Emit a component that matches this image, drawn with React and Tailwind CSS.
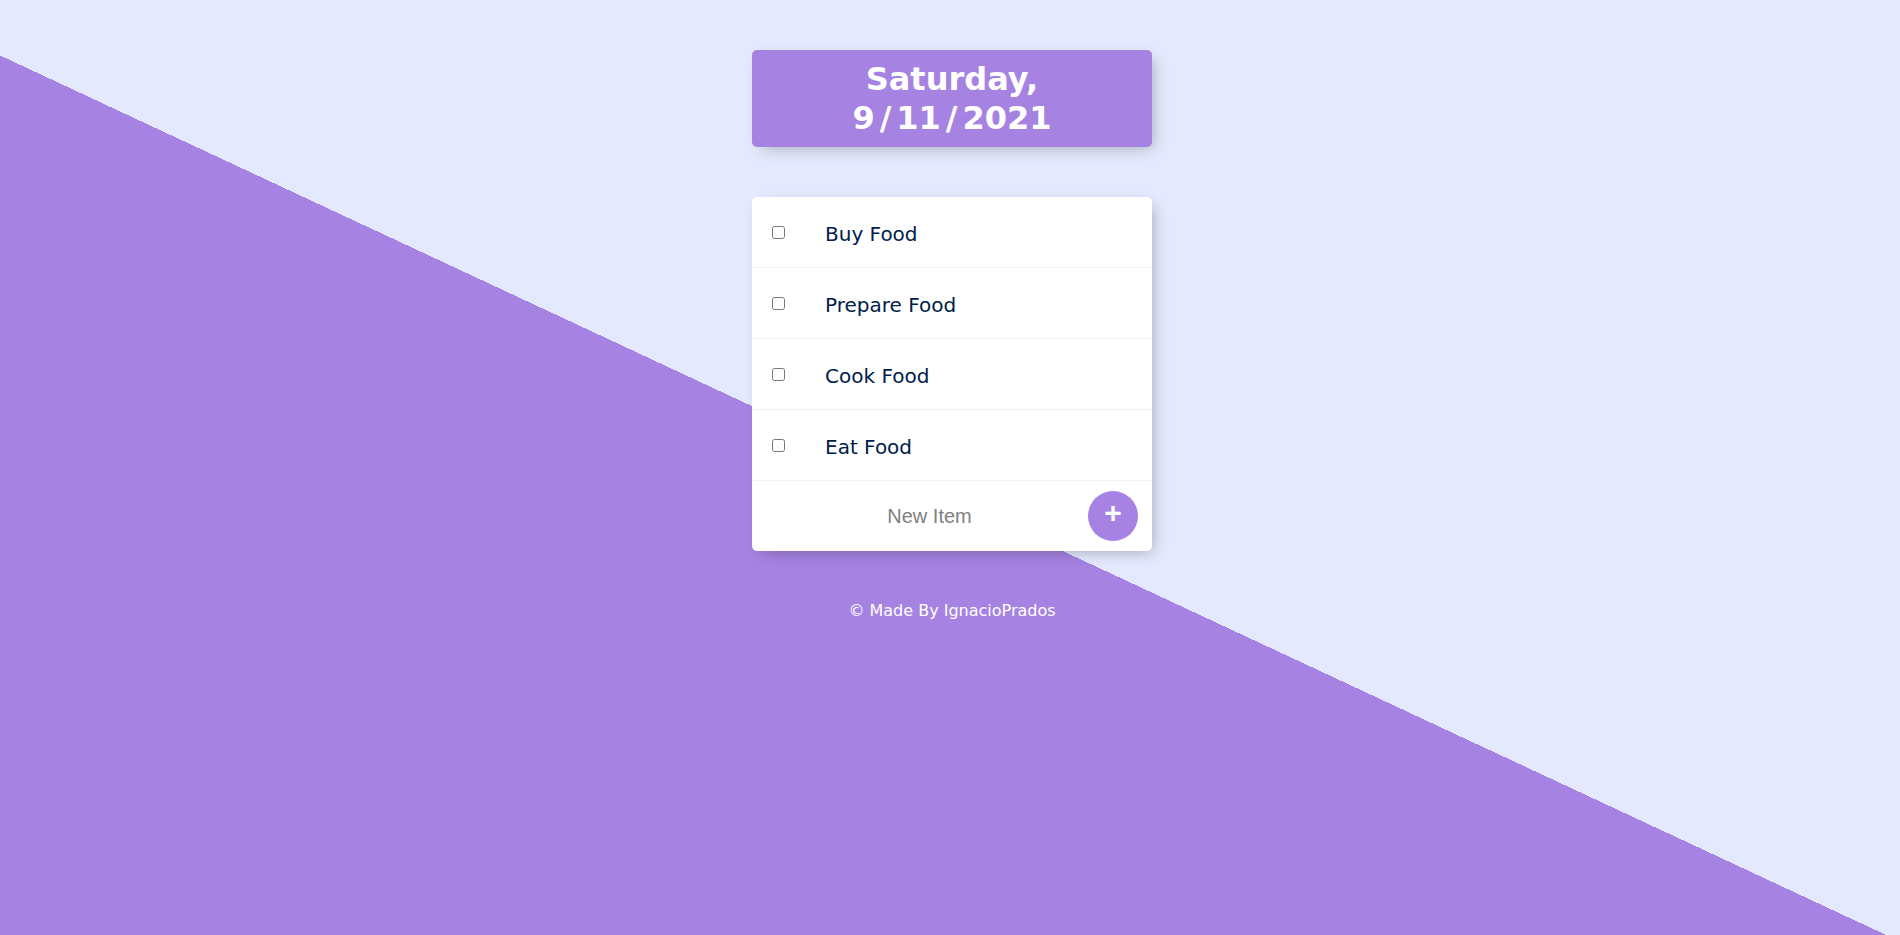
import { useState } from "react";

const initialItems = ["Buy Food", "Prepare Food", "Cook Food", "Eat Food"];

export default function App() {
  const [items, setItems] = useState(initialItems);
  const [done, setDone] = useState({});
  const [text, setText] = useState("");

  function addItem(e) {
    e.preventDefault();
    if (!text.trim()) return;
    setItems([...items, text.trim()]);
    setText("");
  }

  return (
    <div className="min-h-screen bg-[#E4E9FD] bg-[linear-gradient(25deg,#A683E3_48.3%,#E4E9FD_48.3%)] pl-1 pt-[50px] pb-px font-['DejaVu_Sans',Verdana,sans-serif]">
      {/* HEADING */}
      <div className="mx-auto max-w-[400px] rounded-[5px] bg-[#A683E3] text-center shadow-[5px_5px_15px_-5px_rgba(0,0,0,0.3)]">
        <h1 className="p-[10px] text-[32px] font-bold leading-[38.5px] text-white">
          Saturday,
          <br />
          9<span className="px-[5px]">/</span>11<span className="px-[5px]">/</span>2021
        </h1>
      </div>

      {/* LIST */}
      <div className="mx-auto mt-[50px] max-w-[400px] rounded-[5px] bg-white shadow-[5px_5px_15px_-5px_rgba(0,0,0,0.3)]">
        {items.map((item, i) => (
          <div
            key={i}
            className="flex min-h-[70px] items-center border-b border-[#F1F1F1]"
          >
            <input
              type="checkbox"
              className="m-5 h-[13px] w-[13px]"
              checked={!!done[i]}
              onChange={() => setDone({ ...done, [i]: !done[i] })}
            />
            <p
              className={
                done[i]
                  ? "px-5 pt-[22px] pb-[18px] text-[20px] text-[#00204a] line-through decoration-[#A683E3]"
                  : "px-5 pt-[22px] pb-[18px] text-[20px] text-[#00204a]"
              }
            >
              {item}
            </p>
          </div>
        ))}

        <form onSubmit={addItem} className="ml-[21px] flex h-[70px] items-center gap-[2px]">
          <input
            type="text"
            value={text}
            onChange={e => setText(e.target.value)}
            placeholder="New Item"
            autoComplete="off"
            className="h-[60px] w-[313px] bg-transparent text-center font-['Liberation_Sans',Arial,sans-serif] text-[20px] text-[#00204a] outline-none placeholder:text-[#808080] placeholder:opacity-100 focus:shadow-[inset_0_-3px_0_0_#A683E3]"
          />
          <button
            type="submit"
            className="flex h-[50px] w-[50px] items-center justify-center rounded-full bg-[#A683E3] pb-[6px] font-['Liberation_Sans',Arial,sans-serif] text-[30px] font-bold leading-none text-white"
          >
            +
          </button>
        </form>
      </div>

      {/* FOOTER */}
      <footer className="mt-[50px] text-center text-[16px] leading-[19px] text-white">
        © Made By IgnacioPrados
      </footer>
    </div>
  );
}
